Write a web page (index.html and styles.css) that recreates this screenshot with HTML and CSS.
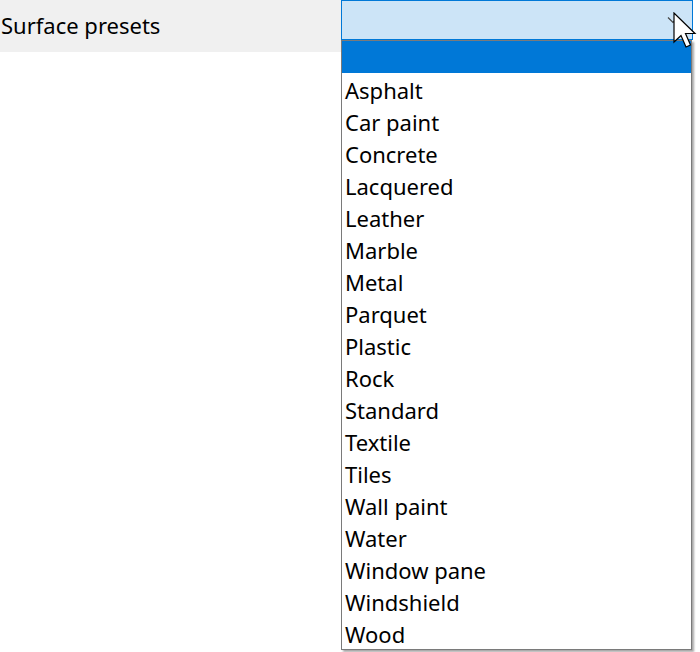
FILE: index.html
```html
<!DOCTYPE html>
<html lang="en">
<head>
    <meta charset="UTF-8">
    <meta name="viewport" content="width=device-width, initial-scale=1.0">
    <title>Surface presets</title>
    <link rel="stylesheet" href="styles.css">
</head>
<body>
    <div class="row">
        <div class="label">Surface presets</div>
        <div class="field">
            <div class="combo">
                <svg class="chevron" width="12" height="8" viewBox="0 0 12 8">
                    <path d="M1 1.5 L6 6.5 L11 1.5" fill="none" stroke="#444" stroke-width="1.2"/>
                </svg>
            </div>
            <ul class="dropdown">
                <li class="selected">&nbsp;</li>
                <li>Asphalt</li>
                <li>Car paint</li>
                <li>Concrete</li>
                <li>Lacquered</li>
                <li>Leather</li>
                <li>Marble</li>
                <li>Metal</li>
                <li>Parquet</li>
                <li>Plastic</li>
                <li>Rock</li>
                <li>Standard</li>
                <li>Textile</li>
                <li>Tiles</li>
                <li>Wall paint</li>
                <li>Water</li>
                <li>Window pane</li>
                <li>Windshield</li>
                <li>Wood</li>
            </ul>
        </div>
    </div>
    <svg class="cursor" width="26" height="40" viewBox="0 0 26 40">
        <path d="M1 1 L1 30 L8 23.5 L13 35 L17.5 33 L12.5 21.5 L22 21.5 Z" fill="#fff" stroke="#000" stroke-width="1.2" stroke-linejoin="miter"/>
    </svg>
</body>
</html>
```

FILE: styles.css
```css
*{
    margin: 0;
    padding: 0;
    box-sizing: border-box;
}
body{
    background: #fff;
    font-family: "Noto Sans", "Open Sans", sans-serif;
    color: #000;
    width: 700px;
    height: 652px;
    overflow: hidden;
    position: relative;
}
.row{
    display: flex;
    height: 52px;
}
.label{
    width: 341px;
    height: 52px;
    background: #f0f0f0;
    font-size: 22px;
    line-height: 51px;
    padding-left: 1px;
}
.field{
    position: relative;
    width: 352px;
}
.combo{
    height: 40px;
    background: #cce4f7;
    border: 1px solid #0078d7;
    position: relative;
}
.chevron{
    position: absolute;
    right: 13px;
    top: 15px;
}
.dropdown{
    position: absolute;
    top: 40px;
    left: 0;
    width: 351px;
    list-style: none;
    background: #fff;
    border: 1px solid #7a7a7a;
    box-shadow: 2px 2px 2px rgba(0,0,0,0.35);
}
.dropdown li{
    height: 32px;
    padding-top: 3px;
    line-height: 29px;
    font-size: 22px;
    padding-left: 3px;
    white-space: nowrap;
}
.dropdown li.selected{
    background: #0078d7;
    color: #fff;
}
.cursor{
    position: absolute;
    left: 673px;
    top: 12px;
}
```
